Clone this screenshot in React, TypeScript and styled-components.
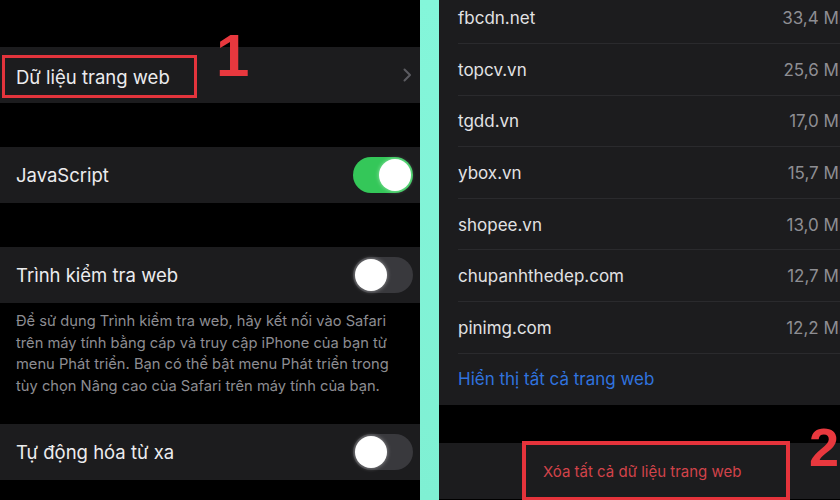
import styled, { createGlobalStyle } from "styled-components";

const GlobalStyle = createGlobalStyle`
  html, body {
    margin: 0;
    padding: 0;
    background: #000;
  }
  body {
    font-family: Inter, "Noto Sans", sans-serif;
    -webkit-font-smoothing: antialiased;
  }
`;

const Page = styled.div`
  display: flex;
  width: 840px;
  height: 500px;
  overflow: hidden;
  background: #000;
`;

const LeftPanel = styled.section`
  position: relative;
  width: 420px;
  flex-shrink: 0;
  padding-top: 47px;
  display: flex;
  flex-direction: column;
`;

const Row = styled.div<{ $gap?: number }>`
  display: flex;
  align-items: center;
  justify-content: space-between;
  height: 56px;
  margin-top: ${({ $gap }) => $gap ?? 0}px;
  padding: 0 7px 0 16px;
  background: #1c1c1e;
  color: #ececee;
  font-size: 18.5px;
  flex-shrink: 0;
`;

const Marked = styled.span`
  display: inline-flex;
  align-items: center;
  height: 43px;
  margin: 3px 0 0 -14px;
  padding: 0 24px 0 11px;
  border: 3px solid #e3343c;
  box-sizing: border-box;
`;

const Chevron = styled.svg`
  width: 9px;
  height: 14px;
  margin-right: 1px;
`;

const Toggle = styled.div<{ $on?: boolean }>`
  position: relative;
  width: 60px;
  height: 36px;
  border-radius: 18px;
  background: ${({ $on }) => ($on ? "#34c759" : "#39393d")};
  flex-shrink: 0;

  &::after {
    content: "";
    position: absolute;
    top: 2px;
    left: ${({ $on }) => ($on ? "26px" : "2px")};
    width: 32px;
    height: 32px;
    border-radius: 50%;
    background: #fff;
    box-shadow: 0 0 4px rgba(255, 255, 255, 0.5);
  }
`;

const Footnote = styled.p`
  margin: 0;
  padding: 8px 8px 0 16px;
  height: 121px;
  box-sizing: border-box;
  color: #8d8d92;
  font-size: 14.7px;
  line-height: 21.7px;
  flex-shrink: 0;
`;

const Step = styled.span`
  position: absolute;
  color: #e8383e;
  font-family: "Liberation Sans", Arial, sans-serif;
  font-weight: 700;
  line-height: 1;
`;

const Divider = styled.div`
  width: 19px;
  flex-shrink: 0;
  background: linear-gradient(180deg, #84f6da 0%, #7ff0d3 100%);
`;

const RightPanel = styled.section`
  position: relative;
  width: 427px;
  flex-shrink: 0;
  display: flex;
  flex-direction: column;
`;

const List = styled.div`
  margin-top: -7.5px;
  background: #1c1c1e;
  display: flex;
  flex-direction: column;
`;

const SiteRow = styled.div<{ $last?: boolean }>`
  position: relative;
  display: flex;
  align-items: center;
  justify-content: space-between;
  height: 51.6px;
  padding: 0 16px 0 19px;
  font-size: 17px;

  &::after {
    content: "";
    display: ${({ $last }) => ($last ? "none" : "block")};
    position: absolute;
    left: 19px;
    right: 0;
    bottom: 0;
    height: 1px;
    background: #2a2a2d;
  }
`;

const Domain = styled.span`
  color: #e2e2e4;
`;

const Size = styled.span`
  color: #8e8e93;
`;

const ShowAll = styled.span`
  color: #3073df;
`;

const DangerRow = styled.div`
  display: flex;
  align-items: center;
  height: 56px;
  margin-top: 38px;
  padding-left: 83px;
  background: #1c1c1e;
`;

const DangerBox = styled.span`
  display: inline-flex;
  align-items: center;
  height: 60px;
  padding: 0 45px 0 17px;
  border: 4px solid #e5333b;
  box-sizing: border-box;
  color: #d2434a;
  font-size: 15px;
`;

const sites = [
  { name: "fbcdn.net", size: "33,4 MB" },
  { name: "topcv.vn", size: "25,6 MB" },
  { name: "tgdd.vn", size: "17,0 MB" },
  { name: "ybox.vn", size: "15,7 MB" },
  { name: "shopee.vn", size: "13,0 MB" },
  { name: "chupanhthedep.com", size: "12,7 MB" },
  { name: "pinimg.com", size: "12,2 MB" },
];

export default function App() {
  return (
    <>
      <GlobalStyle />
      <Page>
        <LeftPanel>
          <Row>
            <Marked>Dữ liệu trang web</Marked>
            <Chevron viewBox="0 0 9 14">
              <polyline points="1.5,1.5 7,7 1.5,12.5" fill="none" stroke="#5c5c61" strokeWidth="2" strokeLinecap="round" strokeLinejoin="round" />
            </Chevron>
          </Row>
          <Row $gap={44}>
            <span>JavaScript</span>
            <Toggle $on />
          </Row>
          <Row $gap={44}>
            <span>Trình kiểm tra web</span>
            <Toggle />
          </Row>
          <Footnote>
            Để sử dụng Trình kiểm tra web, hãy kết nối vào Safari trên máy tính bằng cáp và truy cập iPhone của bạn từ
            menu Phát triển. Bạn có thể bật menu Phát triển trong tùy chọn Nâng cao của Safari trên máy tính của bạn.
          </Footnote>
          <Row>
            <span>Tự động hóa từ xa</span>
            <Toggle />
          </Row>
          <Step style={{ left: 216, top: 26, fontSize: 60 }}>1</Step>
        </LeftPanel>
        <Divider />
        <RightPanel>
          <List>
            {sites.map((s) => (
              <SiteRow key={s.name}>
                <Domain>{s.name}</Domain>
                <Size>{s.size}</Size>
              </SiteRow>
            ))}
            <SiteRow $last>
              <ShowAll>Hiển thị tất cả trang web</ShowAll>
            </SiteRow>
          </List>
          <DangerRow>
            <DangerBox>Xóa tất cả dữ liệu trang web</DangerBox>
          </DangerRow>
          <Step style={{ left: 370, top: 420, fontSize: 54 }}>2</Step>
        </RightPanel>
      </Page>
    </>
  );
}
